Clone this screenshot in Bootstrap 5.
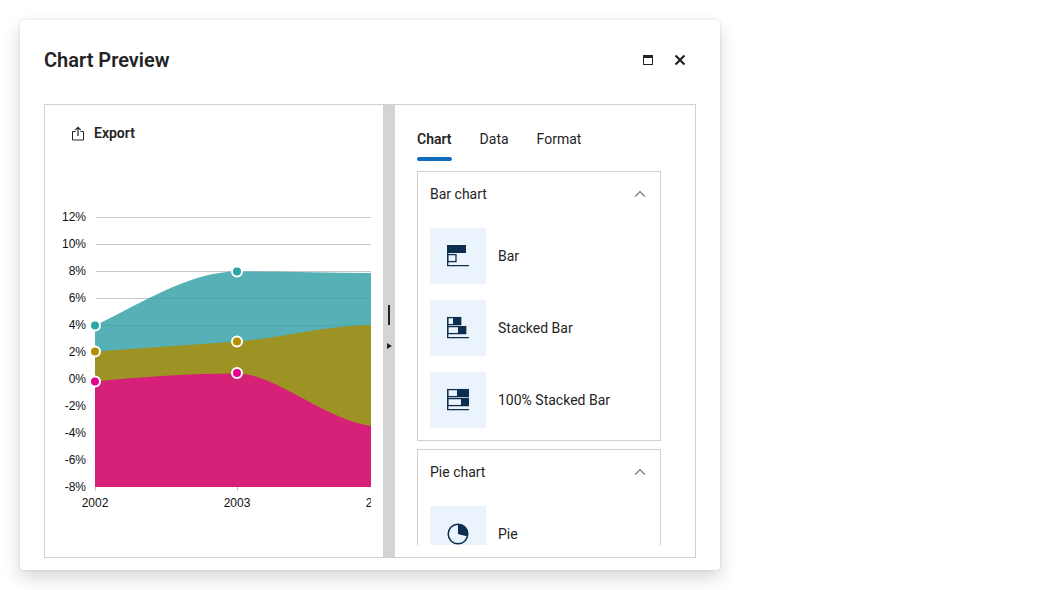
<!DOCTYPE html>
<html lang="en">
<head>
    <meta charset="UTF-8">
    <meta name="viewport" content="width=device-width, initial-scale=1.0">
    <title>Chart Preview</title>
    <link href="https://cdn.jsdelivr.net/npm/bootstrap@5.3.0/dist/css/bootstrap.min.css" rel="stylesheet">
    <script src="https://cdn.jsdelivr.net/npm/bootstrap@5.3.0/dist/js/bootstrap.bundle.min.js"></script>
    <style>
        body { background: #fff; color: #242424; font-family: Roboto, sans-serif; font-size: 14px; line-height: 20px; }
        .preview-dialog { width: 700px; height: 550px; margin: 20px; padding: 0 24px 12px; background: #fff; border-radius: 4px; box-shadow: 0 8px 18px rgba(0,0,0,.16), 0 0 3px rgba(0,0,0,.12); }
        .dialog-head { height: 80px; margin-bottom: 4px; }
        .dialog-title { font-size: 20px; line-height: 28px; font-weight: 600; margin: 0; }
        .head-btn { width: 32px; height: 32px; border: 0; background: none; padding: 0; display: flex; align-items: center; justify-content: center; }
        .preview-frame { height: 454px; border: 1px solid #d1d1d1; }
        .chart-pane { width: 338px; }
        .export-row { height: 55px; padding: 18px 0 0 27px; font-weight: 600; gap: 10px; }
        .export-row svg { margin-top: 3px; }
        .chart-pane svg text { font-family: "Liberation Sans", Arial, sans-serif; font-size: 12px; fill: #111; }
        .splitter { width: 12px; background: #d4d4d4; padding-top: 200px; gap: 18px; }
        .split-handle { width: 2px; height: 20px; background: #242424; }
        .split-arrow { width: 0; height: 0; border-left: 5px solid #242424; border-top: 3px solid transparent; border-bottom: 3px solid transparent; }
        .options-pane { padding: 24px 0 12px 22px; min-width: 0; }
        .tab-row { gap: 28px; margin-bottom: 10px; }
        .tab-item { padding-bottom: 12px; position: relative; }
        .tab-item.active { font-weight: 600; }
        .tab-item.active::after { content: ""; position: absolute; left: 0; right: 0; bottom: 0; height: 4px; border-radius: 2px; background: #0f6cbd; }
        .options-scroll { width: 244px; overflow: hidden; gap: 8px; }
        .chart-group { border: 1px solid #d1d1d1; padding: 0 12px 12px; flex-shrink: 0; }
        .group-head { height: 44px; padding-right: 2px; }
        .type-list { padding-top: 12px; gap: 16px; }
        .type-row { gap: 12px; }
        .type-tile { width: 56px; height: 56px; background: #ebf3fc; }
        .type-tile svg { display: block; }
    </style>
</head>
<body>
    <div class="preview-dialog d-flex flex-column">
        <div class="dialog-head d-flex align-items-center justify-content-between">
            <h5 class="dialog-title">Chart Preview</h5>
            <div class="d-flex align-items-center">
                <button class="head-btn" aria-label="Maximize">
                    <svg width="12" height="12" viewBox="0 0 12 12"><rect x="1.5" y="1.5" width="9" height="9" fill="none" stroke="#242424"/><rect x="1" y="1" width="10" height="3" fill="#242424"/></svg>
                </button>
                <button class="head-btn" aria-label="Close">
                    <svg width="12" height="12" viewBox="0 0 12 12"><path d="M1.5 1.5 10.5 10.5M10.5 1.5 1.5 10.5" fill="none" stroke="#242424" stroke-width="2.2"/></svg>
                </button>
            </div>
        </div>

        <div class="preview-frame d-flex">
            <!-- chart side -->
            <div class="chart-pane d-flex flex-column">
                <div class="export-row d-flex">
                    <svg width="12" height="15" viewBox="0 0 12 15"><path d="M3.5 5.5H.5v8.5h11V5.5h-3" fill="none" stroke="#242424"/><path d="M6 10V1.5M3.2 4.2 6 1.4l2.8 2.8" fill="none" stroke="#242424" stroke-width="1.2"/></svg>
                    <span>Export</span>
                </div>
                <svg width="338" height="397" viewBox="45 160 338 397">
                    <defs><clipPath id="plotClip"><rect x="45" y="160" width="326" height="397"/></clipPath></defs>
                    <g stroke="#c8c8c8" stroke-width="1">
                        <path d="M96 217.5H371M96 244.5H371M96 271.5H371M96 298.5H371M96 325.5H371M96 352.5H371M96 379.5H371"/>
                        <path d="M95.5 487V491M237.5 487V491" />
                    </g>
                    <path d="M95 325.5C142 303 190 271.5 237 271.5C282 271.5 326 273 371 273V360H95Z" fill="#2a9da2" fill-opacity=".8"/>
                    <path d="M95 351.5C142 348 190 345 237 341.5C282 338 326 325 371 325V440H95Z" fill="#9c9324"/>
                    <path d="M95 381.5C142 377 190 373.5 237 373.5C275 373.5 325 420 371 426V487H95Z" fill="#d72077"/>
                    <g text-anchor="end">
                        <text x="86" y="221">12%</text><text x="86" y="248">10%</text><text x="86" y="275">8%</text><text x="86" y="302">6%</text>
                        <text x="86" y="329">4%</text><text x="86" y="356">2%</text><text x="86" y="383">0%</text><text x="86" y="410">-2%</text>
                        <text x="86" y="437">-4%</text><text x="86" y="464">-6%</text><text x="86" y="491">-8%</text>
                    </g>
                    <g text-anchor="middle" clip-path="url(#plotClip)">
                        <text x="95" y="507">2002</text><text x="237" y="507">2003</text><text x="379" y="507">2004</text>
                    </g>
                    <g stroke="#fff" stroke-width="2">
                        <circle cx="95" cy="325.5" r="5" fill="#2aa5a8"/><circle cx="237" cy="271.5" r="5" fill="#2aa5a8"/>
                        <circle cx="95" cy="351.5" r="5" fill="#b38f00"/><circle cx="237" cy="341.5" r="5" fill="#b38f00"/>
                        <circle cx="95" cy="381.5" r="5" fill="#e3008c"/><circle cx="237" cy="373" r="5" fill="#e3008c"/>
                    </g>
                </svg>
            </div>

            <div class="splitter d-flex flex-column align-items-center">
                <div class="split-handle"></div>
                <div class="split-arrow"></div>
            </div>

            <!-- options side -->
            <div class="options-pane d-flex flex-column flex-grow-1">
                <div class="tab-row d-flex">
                    <div class="tab-item active">Chart</div>
                    <div class="tab-item">Data</div>
                    <div class="tab-item">Format</div>
                </div>
                <div class="options-scroll d-flex flex-column flex-grow-1">
                    <div class="chart-group">
                        <div class="group-head d-flex align-items-center justify-content-between">
                            <span>Bar chart</span>
                            <svg width="12" height="8" viewBox="0 0 12 8"><path d="M1.2 6.5 6 1.7l4.8 4.8" fill="none" stroke="#757575" stroke-width="1.2"/></svg>
                        </div>
                        <div class="type-list d-flex flex-column">
                            <div class="type-row d-flex align-items-center">
                                <div class="type-tile d-flex align-items-center justify-content-center">
                                    <svg width="24" height="24" viewBox="0 0 24 24"><path d="M1 1h19v8H1z" fill="#0d2e4e"/><path d="M1.7 1v21M1 21.6h22" stroke="#0d2e4e" stroke-width="1.3" fill="none"/><rect x="1.7" y="10.6" width="8.3" height="7" fill="none" stroke="#0d2e4e" stroke-width="1.3"/></svg>
                                </div>
                                <span>Bar</span>
                            </div>
                            <div class="type-row d-flex align-items-center">
                                <div class="type-tile d-flex align-items-center justify-content-center">
                                    <svg width="24" height="24" viewBox="0 0 24 24"><path d="M1.7 1v21M1 21.6h22" stroke="#0d2e4e" stroke-width="1.3" fill="none"/><rect x="1.7" y="1.6" width="13" height="7" fill="none" stroke="#0d2e4e" stroke-width="1.3"/><path d="M7 1h8v8H7zM12 10h8v8h-8z" fill="#0d2e4e"/><rect x="1.7" y="10.6" width="18" height="7" fill="none" stroke="#0d2e4e" stroke-width="1.3"/></svg>
                                </div>
                                <span>Stacked Bar</span>
                            </div>
                            <div class="type-row d-flex align-items-center">
                                <div class="type-tile d-flex align-items-center justify-content-center">
                                    <svg width="24" height="24" viewBox="0 0 24 24"><path d="M1.7 1v21M1 21.6h22" stroke="#0d2e4e" stroke-width="1.3" fill="none"/><rect x="1.7" y="1.6" width="20.6" height="7" fill="none" stroke="#0d2e4e" stroke-width="1.3"/><rect x="1.7" y="10.6" width="20.6" height="7" fill="none" stroke="#0d2e4e" stroke-width="1.3"/><path d="M11 1h12v8H11zM15 10h8v8h-8z" fill="#0d2e4e"/></svg>
                                </div>
                                <span>100% Stacked Bar</span>
                            </div>
                        </div>
                    </div>
                    <div class="chart-group">
                        <div class="group-head d-flex align-items-center justify-content-between">
                            <span>Pie chart</span>
                            <svg width="12" height="8" viewBox="0 0 12 8"><path d="M1.2 6.5 6 1.7l4.8 4.8" fill="none" stroke="#757575" stroke-width="1.2"/></svg>
                        </div>
                        <div class="type-list d-flex flex-column">
                            <div class="type-row d-flex align-items-center">
                                <div class="type-tile d-flex align-items-center justify-content-center">
                                    <svg width="24" height="24" viewBox="0 0 24 24"><circle cx="12" cy="12" r="9.8" fill="none" stroke="#0d2e4e" stroke-width="1.5"/><path d="M12 2v10l9.6 2.6A10 10 0 0 0 12 2z" fill="#0d2e4e"/></svg>
                                </div>
                                <span>Pie</span>
                            </div>
                        </div>
                    </div>
                </div>
            </div>
        </div>
    </div>
</body>
</html>
